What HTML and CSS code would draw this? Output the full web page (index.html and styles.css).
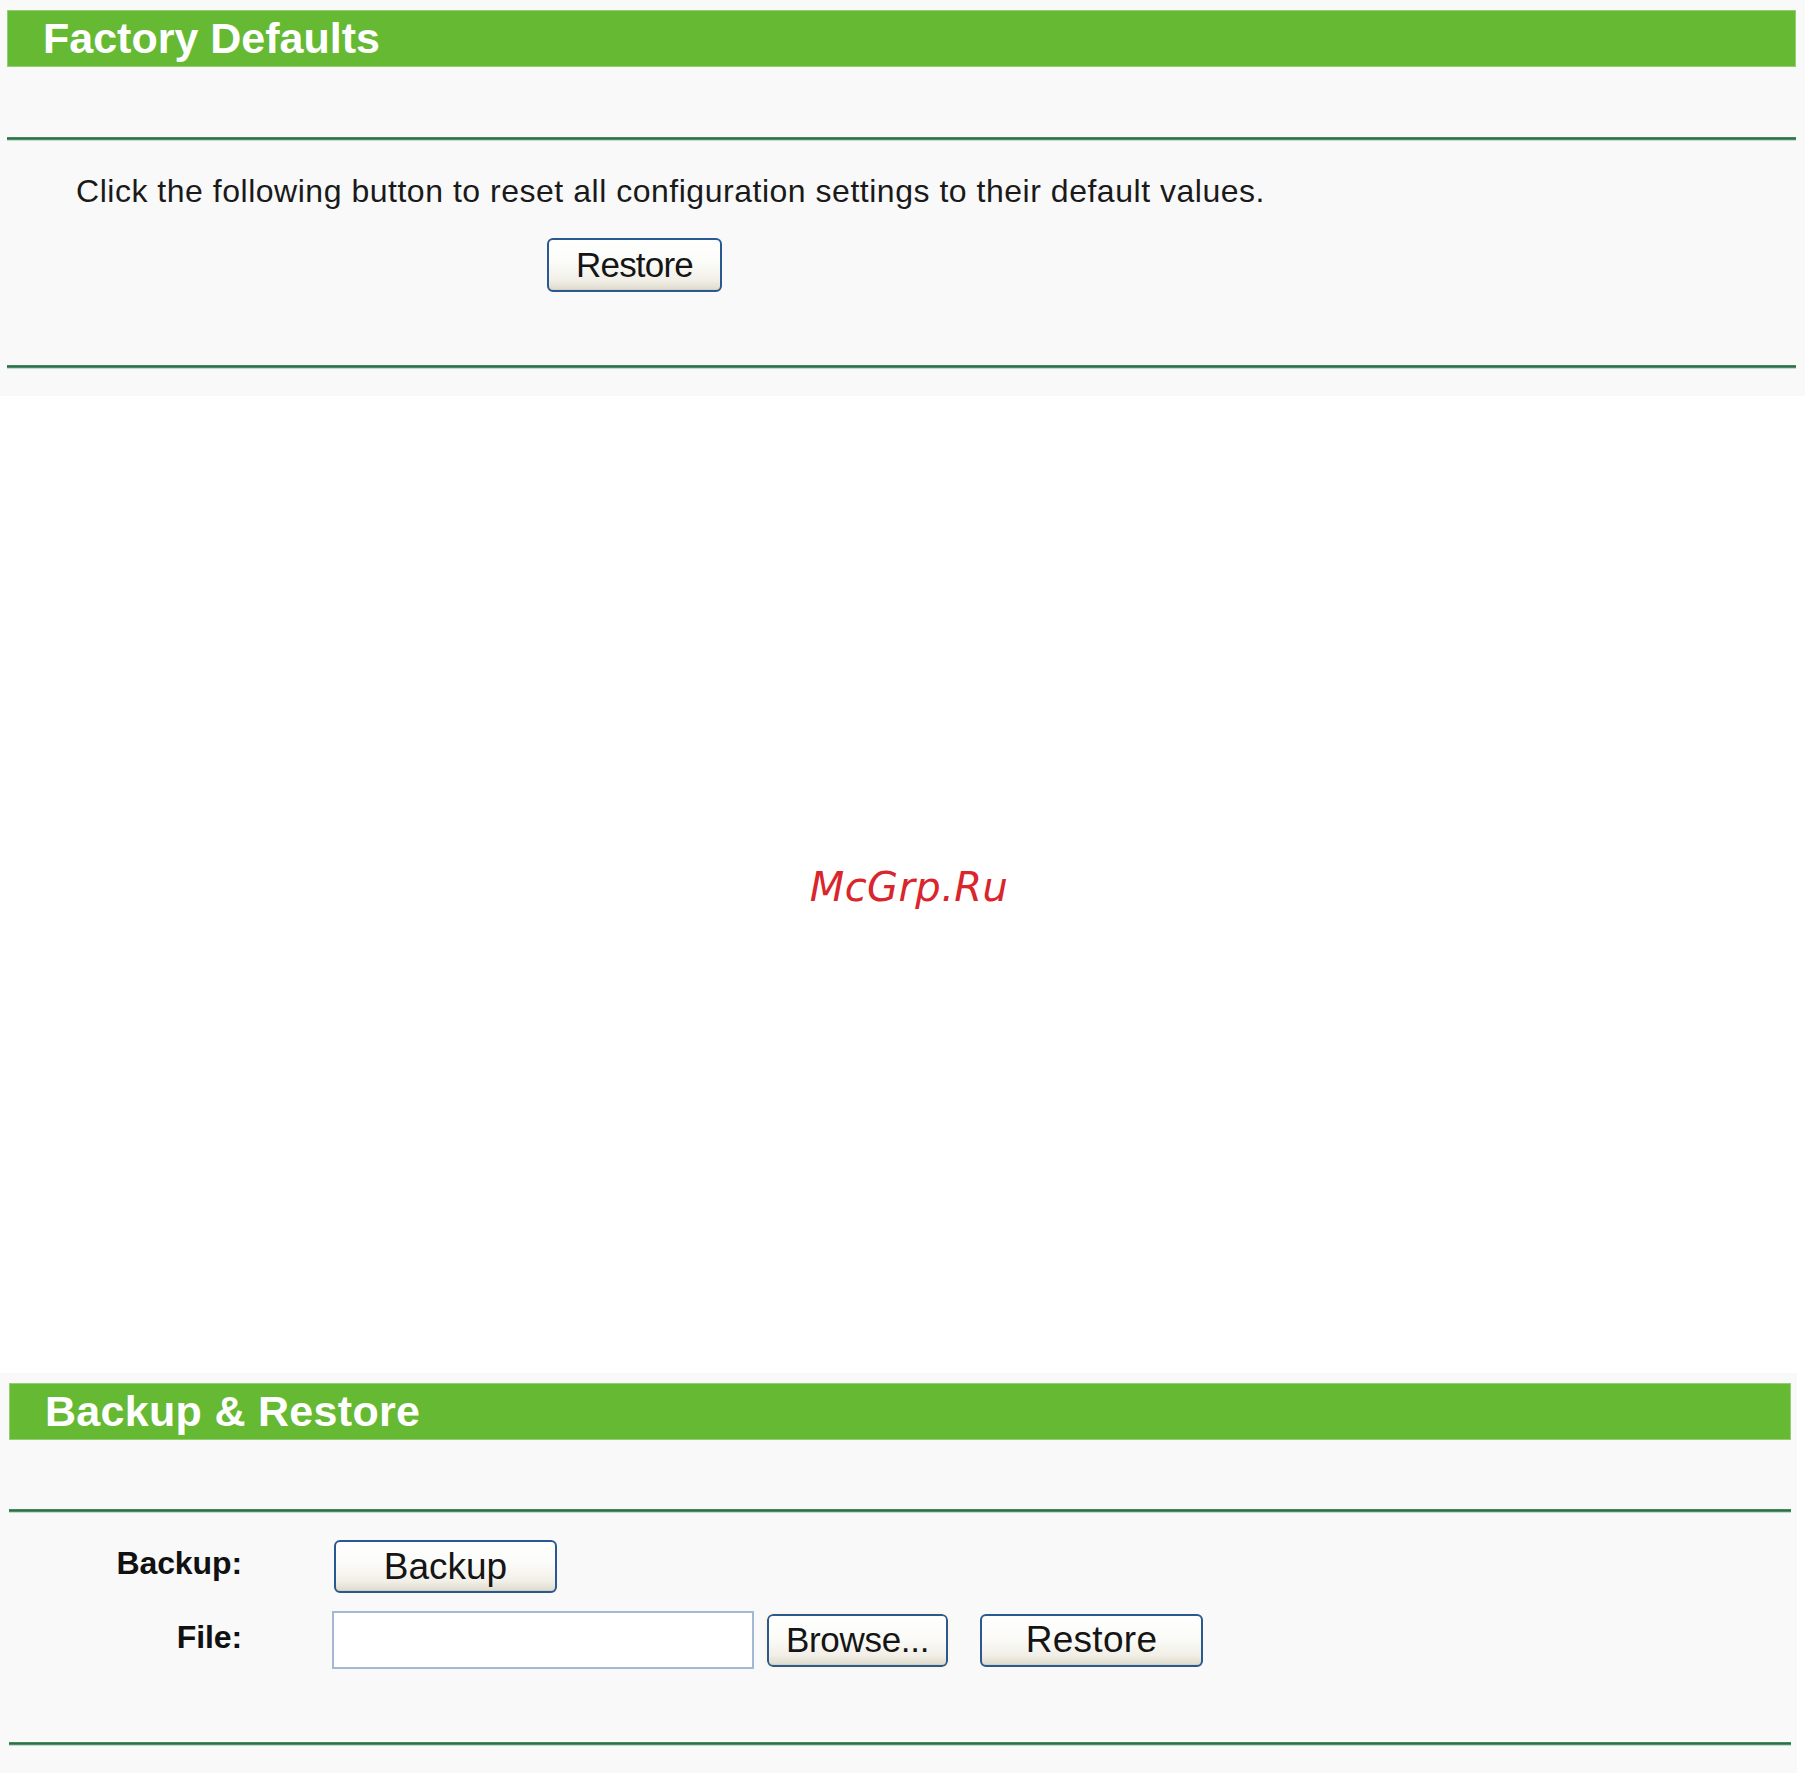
FILE: index.html
```html
<!DOCTYPE html>
<html lang="en">
<head>
<meta charset="utf-8">
<title>Factory Defaults / Backup &amp; Restore</title>
<link rel="stylesheet" href="styles.css">
</head>
<body>
  <section class="panel panel-top">
    <h1 class="bar">Factory Defaults</h1>
    <div class="rule rule-first"></div>
    <p class="note">Click the following button to reset all configuration settings to their default values.</p>
    <button class="btn btn-reset" type="button">Restore</button>
    <div class="rule rule-last"></div>
  </section>

  <div class="gap">
    <span class="mark">McGrp.Ru</span>
  </div>

  <section class="panel panel-bottom">
    <h1 class="bar">Backup &amp; Restore</h1>
    <div class="rule rule-first"></div>
    <div class="form">
      <span class="label">Backup:</span>
      <div class="controls">
        <button class="btn btn-backup" type="button">Backup</button>
      </div>
      <span class="label">File:</span>
      <div class="controls">
        <input class="file-field" type="text">
        <button class="btn btn-browse" type="button">Browse...</button>
        <button class="btn btn-restore" type="button">Restore</button>
      </div>
    </div>
    <div class="rule rule-end"></div>
  </section>
</body>
</html>
```

FILE: styles.css
```css
html, body {
  margin: 0;
  padding: 0;
  background: #ffffff;
}

body {
  font-family: "Liberation Sans", Arial, sans-serif;
  color: #161616;
}

.panel {
  background: #f9f9f9;
  display: flex;
  flex-direction: column;
}

.panel-top {
  padding: 10px 9px 27px 7px;
}

.panel-bottom {
  width: 1797px;
  box-sizing: border-box;
  padding: 10px 6px 27px 9px;
}

/* green section title bar */
.bar {
  margin: 0;
  height: 55px;
  line-height: 55px;
  background: #66b933;
  border: 1px solid #93cf72;
  color: #ffffff;
  font-size: 43px;
  font-weight: bold;
  padding-left: 35px;
  letter-spacing: 0;
}

.panel-bottom .bar {
  padding-left: 35px;
  line-height: 54px;
  letter-spacing: 0.3px;
}

/* dark green divider line */
.rule {
  height: 4px;
  background: linear-gradient(to bottom, #5f9d79 0, #2c7147 25%, #2a6e45 55%, #a9cdb6 80%, #eef4f0 100%);
}

.rule-first {
  margin-top: 70px;
}

.panel-bottom .rule-first {
  margin-top: 69px;
}

.note {
  margin: 31px 0 0 69px;
  font-size: 32px;
  line-height: 38px;
  letter-spacing: 0.52px;
  color: #1a1a1a;
}

.btn {
  font-family: "Liberation Sans", Arial, sans-serif;
  color: #151515;
  background: linear-gradient(to bottom, #ffffff 0, #fbfbf8 45%, #f1efe7 80%, #dedbcc 100%);
  border: 2px solid #2a5890;
  border-radius: 6px;
  padding: 0;
  margin: 0;
  box-sizing: border-box;
  box-shadow: inset 0 -1px 0 #d6d2c2;
}

.btn-reset {
  align-self: flex-start;
  margin: 28px 0 0 540px;
  width: 175px;
  height: 54px;
  font-size: 35px;
  letter-spacing: -0.8px;
}

.rule-last {
  margin-top: 73px;
}

.gap {
  height: 977px;
  display: flex;
  align-items: center;
  justify-content: center;
}

.mark {
  margin: 0 0 0 13px;
  font-family: "DejaVu Sans", sans-serif;
  font-style: oblique;
  font-size: 40px;
  color: #d9252b;
  letter-spacing: 0.4px;
  position: relative;
  top: 2px;
}

/* label / controls grid */
.form {
  display: grid;
  grid-template-columns: 233px auto;
  column-gap: 90px;
  row-gap: 18px;
  align-items: center;
  margin-top: 27px;
}

.label {
  text-align: right;
  font-weight: bold;
  font-size: 32px;
  letter-spacing: -0.1px;
  color: #111111;
  position: relative;
  top: -3px;
}

.controls {
  display: flex;
  align-items: center;
}

.btn-backup {
  margin-left: 2px;
  width: 223px;
  height: 53px;
  font-size: 37px;
}

.file-field {
  width: 422px;
  height: 58px;
  box-sizing: border-box;
  border: 2px solid #a3b8d2;
  background: #ffffff;
  margin: 0;
  padding: 0 6px;
  font-size: 30px;
}

.btn-browse {
  margin-left: 13px;
  width: 181px;
  height: 53px;
  font-size: 35px;
  letter-spacing: -0.3px;
  outline: 2px solid #fbf6e6;
}

.btn-restore {
  margin-left: 32px;
  width: 223px;
  height: 53px;
  font-size: 37px;
  letter-spacing: 0.3px;
}

.rule-end {
  margin-top: 73px;
}
```
